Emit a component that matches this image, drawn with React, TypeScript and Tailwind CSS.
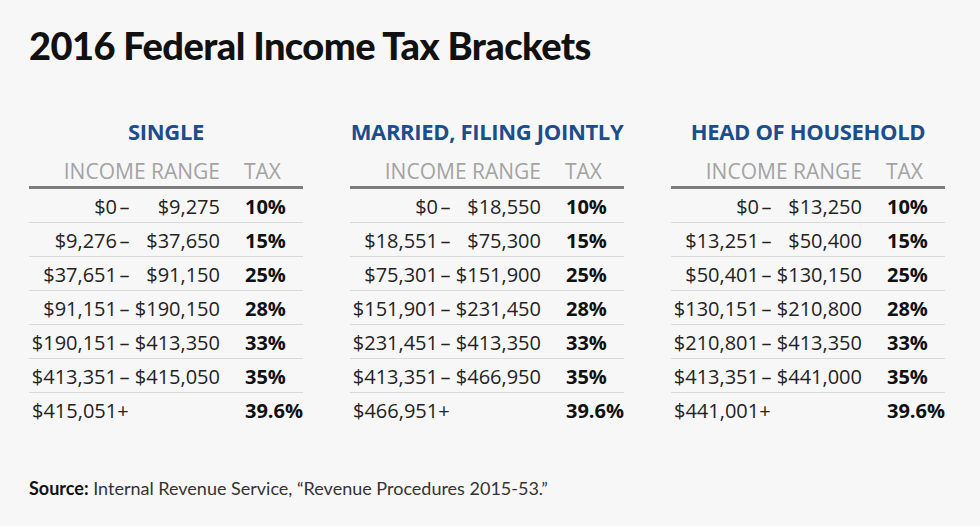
import React from "react";

type Row = { lo: string; hi?: string; tax: string };

const tables: { title: string; rows: Row[] }[] = [
  {
    title: "SINGLE",
    rows: [
      { lo: "$0", hi: "$9,275", tax: "10%" },
      { lo: "$9,276", hi: "$37,650", tax: "15%" },
      { lo: "$37,651", hi: "$91,150", tax: "25%" },
      { lo: "$91,151", hi: "$190,150", tax: "28%" },
      { lo: "$190,151", hi: "$413,350", tax: "33%" },
      { lo: "$413,351", hi: "$415,050", tax: "35%" },
      { lo: "$415,051+", tax: "39.6%" },
    ],
  },
  {
    title: "MARRIED, FILING JOINTLY",
    rows: [
      { lo: "$0", hi: "$18,550", tax: "10%" },
      { lo: "$18,551", hi: "$75,300", tax: "15%" },
      { lo: "$75,301", hi: "$151,900", tax: "25%" },
      { lo: "$151,901", hi: "$231,450", tax: "28%" },
      { lo: "$231,451", hi: "$413,350", tax: "33%" },
      { lo: "$413,351", hi: "$466,950", tax: "35%" },
      { lo: "$466,951+", tax: "39.6%" },
    ],
  },
  {
    title: "HEAD OF HOUSEHOLD",
    rows: [
      { lo: "$0", hi: "$13,250", tax: "10%" },
      { lo: "$13,251", hi: "$50,400", tax: "15%" },
      { lo: "$50,401", hi: "$130,150", tax: "25%" },
      { lo: "$130,151", hi: "$210,800", tax: "28%" },
      { lo: "$210,801", hi: "$413,350", tax: "33%" },
      { lo: "$413,351", hi: "$441,000", tax: "35%" },
      { lo: "$441,001+", tax: "39.6%" },
    ],
  },
];

function BracketTable({ title, rows }: { title: string; rows: Row[] }) {
  return (
    <div className="w-[274px]">
      <h2 className="whitespace-nowrap text-center text-[22px] leading-[28px] font-bold text-[#1c4d8c] tracking-[-0.015em]">
        {title}
      </h2>
      <div className="mt-[10px] flex h-[34px] items-center border-b-[3px] border-[#7d7d7d] text-[21px] leading-[28px] text-[#a3a3a3]">
        <span className="w-[191px] text-right">INCOME RANGE</span>
        <span className="pl-[24px]">TAX</span>
      </div>
      {rows.map((r, i) => (
        <div
          key={i}
          className={`flex h-[34px] items-center pt-[2px] text-[20px] leading-[28px] text-[#232323] ${
            i < rows.length - 1 ? "border-b border-[#d9d9d9]" : ""
          }`}
        >
          {r.hi ? (
            <>
              <span className="w-[88px] text-right">{r.lo}</span>
              <span className="w-[15px] text-center">–</span>
              <span className="w-[88px] text-right">{r.hi}</span>
            </>
          ) : (
            <span className="w-[191px] pl-[3px]">{r.lo}</span>
          )}
          <span className="pl-[25px] font-bold text-[#111]">{r.tax}</span>
        </div>
      ))}
    </div>
  );
}

export default function App() {
  return (
    <div className="w-[980px] h-[526px] bg-[#f7f7f7] px-[29px] pt-[25px] font-['Open_Sans',sans-serif] overflow-hidden">
      <h1 className="font-['Lato',sans-serif] text-[38px] leading-[40px] font-black text-[#111] tracking-[-0.015em]">
        2016 Federal Income Tax Brackets
      </h1>

      <div className="mt-[52px] flex gap-[47px]">
        {tables.map((t) => (
          <BracketTable key={t.title} title={t.title} rows={t.rows} />
        ))}
      </div>

      <p className="mt-[50px] font-['Lato',sans-serif] text-[18px] leading-[22px] text-[#333]">
        <span className="font-bold text-[#111]">Source:</span> Internal Revenue Service, “Revenue Procedures 2015-53.”
      </p>
    </div>
  );
}
